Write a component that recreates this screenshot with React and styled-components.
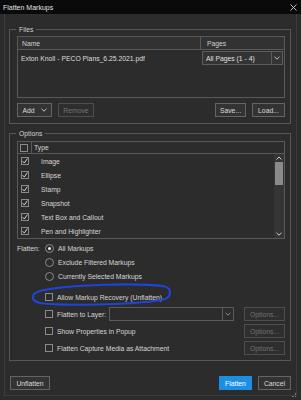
import React from "react";
import styled, { createGlobalStyle, css } from "styled-components";

const Global = createGlobalStyle`
  * { box-sizing: border-box; }
  html, body { margin: 0; padding: 0; background: #2c2c2c; }
  body { font-family: "Liberation Sans", Arial, sans-serif; font-size: 6.8px; color: #d6d6d6; }
`;

const Window = styled.div`
  width: 301px;
  height: 400px;
  display: flex;
  flex-direction: column;
  background: #2c2c2c;
  overflow: hidden;
`;

const TitleBar = styled.div`
  height: 14px;
  flex: none;
  background: #0a0a0a;
  display: flex;
  align-items: center;
  justify-content: space-between;
  padding: 0 4px 0 3px;
  font-size: 7px;
  color: #e2e2e2;
`;

const Body = styled.div`
  flex: 1;
  margin: 0 4px 4px 4px;
  border: 1px solid #3d3d3d;
  border-top: none;
  padding: 15px 5px 0 4px;
  display: flex;
  flex-direction: column;
  position: relative;
`;

const Group = styled.div`
  position: relative;
  border: 1px solid #575757;
  padding: ${(p) => p.$pad};
  margin-top: ${(p) => p.$mt || 0}px;
  display: flex;
  flex-direction: column;
`;

const Legend = styled.span`
  position: absolute;
  top: -5px;
  left: 6px;
  padding: 0 3px;
  background: #2c2c2c;
  line-height: 9px;
  color: #d0d0d0;
`;

const Table = styled.div`
  height: 62px;
  border: 1px solid #595959;
  display: flex;
  flex-direction: column;
`;

const TableHead = styled.div`
  height: 13px;
  display: grid;
  grid-template-columns: 182px 1fr;
  background: #323232;
  border-bottom: 1px solid #5a5a5a;
`;

const HeadCell = styled.div`
  display: flex;
  align-items: center;
  padding-left: ${(p) => p.$pl}px;
  border-left: ${(p) => (p.$div ? "1px solid #5a5a5a" : "none")};
  color: #d0d0d0;
`;

const FileRow = styled.div`
  display: grid;
  grid-template-columns: 184px 81px;
  align-items: center;
  padding-top: 1px;
  height: 15px;
`;

const FileName = styled.div`
  padding-left: 3px;
  color: #dcdcdc;
  white-space: nowrap;
`;

const Select = styled.div`
  height: ${(p) => p.$h || 14}px;
  width: ${(p) => p.$w}px;
  border: 1px solid #5c5c5c;
  background: ${(p) => p.$bg || "#343434"};
  display: flex;
  align-items: stretch;
`;

const SelectText = styled.div`
  flex: 1;
  display: flex;
  align-items: center;
  padding-left: 3px;
  color: #e0e0e0;
  white-space: nowrap;
`;

const SelectArrow = styled.div`
  width: 11px;
  border-left: 1px solid #5c5c5c;
  display: flex;
  align-items: center;
  justify-content: center;
`;

const ButtonRow = styled.div`
  display: flex;
  align-items: center;
  gap: ${(p) => p.$gap || 6}px;
  margin-top: ${(p) => p.$mt || 0}px;
  padding-left: ${(p) => p.$pl || 0}px;
`;

const Spacer = styled.div`
  flex: 1;
`;

const Button = styled.div`
  height: 14px;
  width: ${(p) => p.$w}px;
  border: 1px solid ${(p) => (p.$disabled ? "#4e4e4e" : "#646464")};
  background: ${(p) => (p.$disabled ? "#2e2e2e" : "#333333")};
  color: ${(p) => (p.$disabled ? "#727272" : "#dadada")};
  display: flex;
  align-items: center;
  justify-content: center;
  gap: 6px;
  white-space: nowrap;
  ${(p) =>
    p.$primary &&
    css`
      background: #1d8fe3;
      border-color: #1d8fe3;
      color: #ffffff;
    `}
`;

const List = styled.div`
  height: 98px;
  border: 1px solid #595959;
  display: flex;
  flex-direction: column;
  position: relative;
`;

const ListHead = styled.div`
  height: 12px;
  flex: none;
  display: flex;
  align-items: center;
  border-bottom: 1px solid #5a5a5a;
`;

const HeadBoxCell = styled.div`
  width: 14px;
  height: 100%;
  display: flex;
  align-items: center;
  padding-left: 2px;
  border-right: 1px solid #5a5a5a;
`;

const HeadLabel = styled.div`
  padding-left: 2px;
  color: #d6d6d6;
`;

const ListBody = styled.div`
  flex: 1;
  display: flex;
`;

const Rows = styled.div`
  flex: 1;
  display: flex;
  flex-direction: column;
`;

const Row = styled.div`
  height: 14px;
  display: flex;
  align-items: center;
  padding-left: 3px;
  gap: 12px;
  color: #d6d6d6;
`;

const Box = styled.div`
  width: 8px;
  height: 8px;
  flex: none;
  border: 1px solid #8a8a8a;
  display: flex;
  align-items: center;
  justify-content: center;
`;

const Scrollbar = styled.div`
  width: 10px;
  background: #353535;
  display: flex;
  flex-direction: column;
  align-items: center;
`;

const ScrollArrow = styled.div`
  height: 8px;
  display: flex;
  align-items: center;
  justify-content: center;
`;

const Thumb = styled.div`
  width: 8px;
  height: 23px;
  background: #8a8a8a;
`;

const FlattenGrid = styled.div`
  display: grid;
  grid-template-columns: 28px 1fr;
  margin-top: 2px;
`;

const FlattenLabel = styled.div`
  height: 14px;
  display: flex;
  align-items: center;
  color: #d6d6d6;
`;

const Choices = styled.div`
  display: flex;
  flex-direction: column;
`;

const Choice = styled.div`
  height: 14px;
  display: flex;
  align-items: center;
  gap: 4px;
  color: #d6d6d6;
  white-space: nowrap;
  position: relative;
`;

const Radio = styled.div`
  width: 9px;
  height: 9px;
  border-radius: 50%;
  border: 1px solid #8a8a8a;
  display: flex;
  align-items: center;
  justify-content: center;
  flex: none;
  &::after {
    content: "";
    width: 3px;
    height: 3px;
    border-radius: 50%;
    background: ${(p) => (p.$on ? "#f2f2f2" : "transparent")};
  }
`;

const Checks = styled.div`
  display: flex;
  flex-direction: column;
  gap: 3px;
  margin-top: 7px;
  padding-left: 28px;
`;

const CheckLine = styled.div`
  height: 14px;
  display: flex;
  align-items: center;
  position: relative;
  color: #d6d6d6;
  white-space: nowrap;
`;

const CheckLabel = styled.div`
  margin-left: 4px;
  width: ${(p) => (p.$w ? `${p.$w}px` : "auto")};
  flex: ${(p) => (p.$w ? "none" : "1")};
`;

const Highlight = styled.svg`
  position: absolute;
  left: -16px;
  top: -9px;
  width: 148px;
  height: 27px;
  overflow: visible;
  pointer-events: none;
`;

const Grip = styled.div`
  position: absolute;
  right: 0;
  bottom: -2px;
  width: 4px;
  height: 4px;
  border-right: 1px dotted #777;
  border-bottom: 1px dotted #777;
`;

const Chevron = ({ c = "#bdbdbd", up }) => (
  <svg width="6" height="4" viewBox="0 0 6 4">
    <polyline
      points={up ? "0.5,3.5 3,1 5.5,3.5" : "0.5,0.8 3,3.2 5.5,0.8"}
      fill="none"
      stroke={c}
      strokeWidth="1"
    />
  </svg>
);

const Check = () => (
  <svg width="6" height="6" viewBox="0 0 6 6">
    <polyline points="0.6,3.2 2.3,5 5.4,0.6" fill="none" stroke="#e6e6e6" strokeWidth="0.9" />
  </svg>
);

const types = ["Image", "Ellipse", "Stamp", "Snapshot", "Text Box and Callout", "Pen and Highlighter"];

export default function App() {
  return (
    <>
      <Global />
      <Window>
        <TitleBar>
          <span>Flatten Markups</span>
          <svg width="7" height="7" viewBox="0 0 7 7">
            <path d="M0.5 0.5 L6.5 6.5 M6.5 0.5 L0.5 6.5" stroke="#d8d8d8" strokeWidth="0.9" />
          </svg>
        </TitleBar>
        <Body>
          <Group $pad="6px 5px 6px 7px">
            <Legend>Files</Legend>
            <Table>
              <TableHead>
                <HeadCell $pl={4}>Name</HeadCell>
                <HeadCell $pl={6} $div>Pages</HeadCell>
              </TableHead>
              <FileRow>
                <FileName>Exton Knoll - PECO Plans_6.25.2021.pdf</FileName>
                <Select $w={81}>
                  <SelectText>All Pages (1 - 4)</SelectText>
                  <SelectArrow>
                    <Chevron />
                  </SelectArrow>
                </Select>
              </FileRow>
            </Table>
            <ButtonRow $mt={5}>
              <Button $w={35}>
                <span>Add</span>
                <Chevron />
              </Button>
              <Button $w={36} $disabled>Remove</Button>
              <Spacer />
              <Button $w={31}>Save...</Button>
              <Button $w={33}>Load...</Button>
            </ButtonRow>
          </Group>

          <Group $pad="7px 5px 5px 7px" $mt={9}>
            <Legend>Options</Legend>
            <List>
              <ListHead>
                <HeadBoxCell>
                  <Box />
                </HeadBoxCell>
                <HeadLabel>Type</HeadLabel>
              </ListHead>
              <ListBody>
                <Rows>
                  {types.map((t) => (
                    <Row key={t}>
                      <Box>
                        <Check />
                      </Box>
                      <span>{t}</span>
                    </Row>
                  ))}
                </Rows>
                <Scrollbar>
                  <ScrollArrow>
                    <Chevron up c="#cfcfcf" />
                  </ScrollArrow>
                  <Thumb />
                  <Spacer />
                  <ScrollArrow>
                    <Chevron c="#cfcfcf" />
                  </ScrollArrow>
                </Scrollbar>
              </ListBody>
            </List>

            <FlattenGrid>
              <FlattenLabel>Flatten:</FlattenLabel>
              <Choices>
                <Choice>
                  <Radio $on />
                  <span>All Markups</span>
                </Choice>
                <Choice>
                  <Radio />
                  <span>Exclude Filtered Markups</span>
                </Choice>
                <Choice>
                  <Radio />
                  <span>Currently Selected Markups</span>
                </Choice>
              </Choices>
            </FlattenGrid>

            <Checks>
              <CheckLine>
                <Box />
                <CheckLabel>Allow Markup Recovery (Unflatten)</CheckLabel>
                <Highlight viewBox="0 0 148 27">
                  <path
                    d="M11 10 C41 3, 111 2, 134 5 C144 7, 143 17, 133 19 C101 24, 31 25, 11 22 C2 20, 1 13, 11 10 Z"
                    fill="none"
                    stroke="#1f44d6"
                    strokeWidth="2.2"
                  />
                </Highlight>
              </CheckLine>
              <CheckLine>
                <Box />
                <CheckLabel $w={52}>Flatten to Layer:</CheckLabel>
                <Select $w={125} $bg="#2c2c2c">
                  <SelectText />
                  <SelectArrow>
                    <Chevron c="#8a8a8a" />
                  </SelectArrow>
                </Select>
                <Spacer />
                <Button $w={41} $disabled>Options...</Button>
              </CheckLine>
              <CheckLine>
                <Box />
                <CheckLabel>Show Properties in Popup</CheckLabel>
                <Button $w={41} $disabled>Options...</Button>
              </CheckLine>
              <CheckLine>
                <Box />
                <CheckLabel>Flatten Capture Media as Attachment</CheckLabel>
                <Button $w={41} $disabled>Options...</Button>
              </CheckLine>
            </Checks>
          </Group>

          <ButtonRow $mt={15} $pl={1}>
            <Button $w={40}>Unflatten</Button>
            <Spacer />
            <Button $w={33} $primary>Flatten</Button>
            <Button $w={33}>Cancel</Button>
          </ButtonRow>
          <Grip />
        </Body>
      </Window>
    </>
  );
}
